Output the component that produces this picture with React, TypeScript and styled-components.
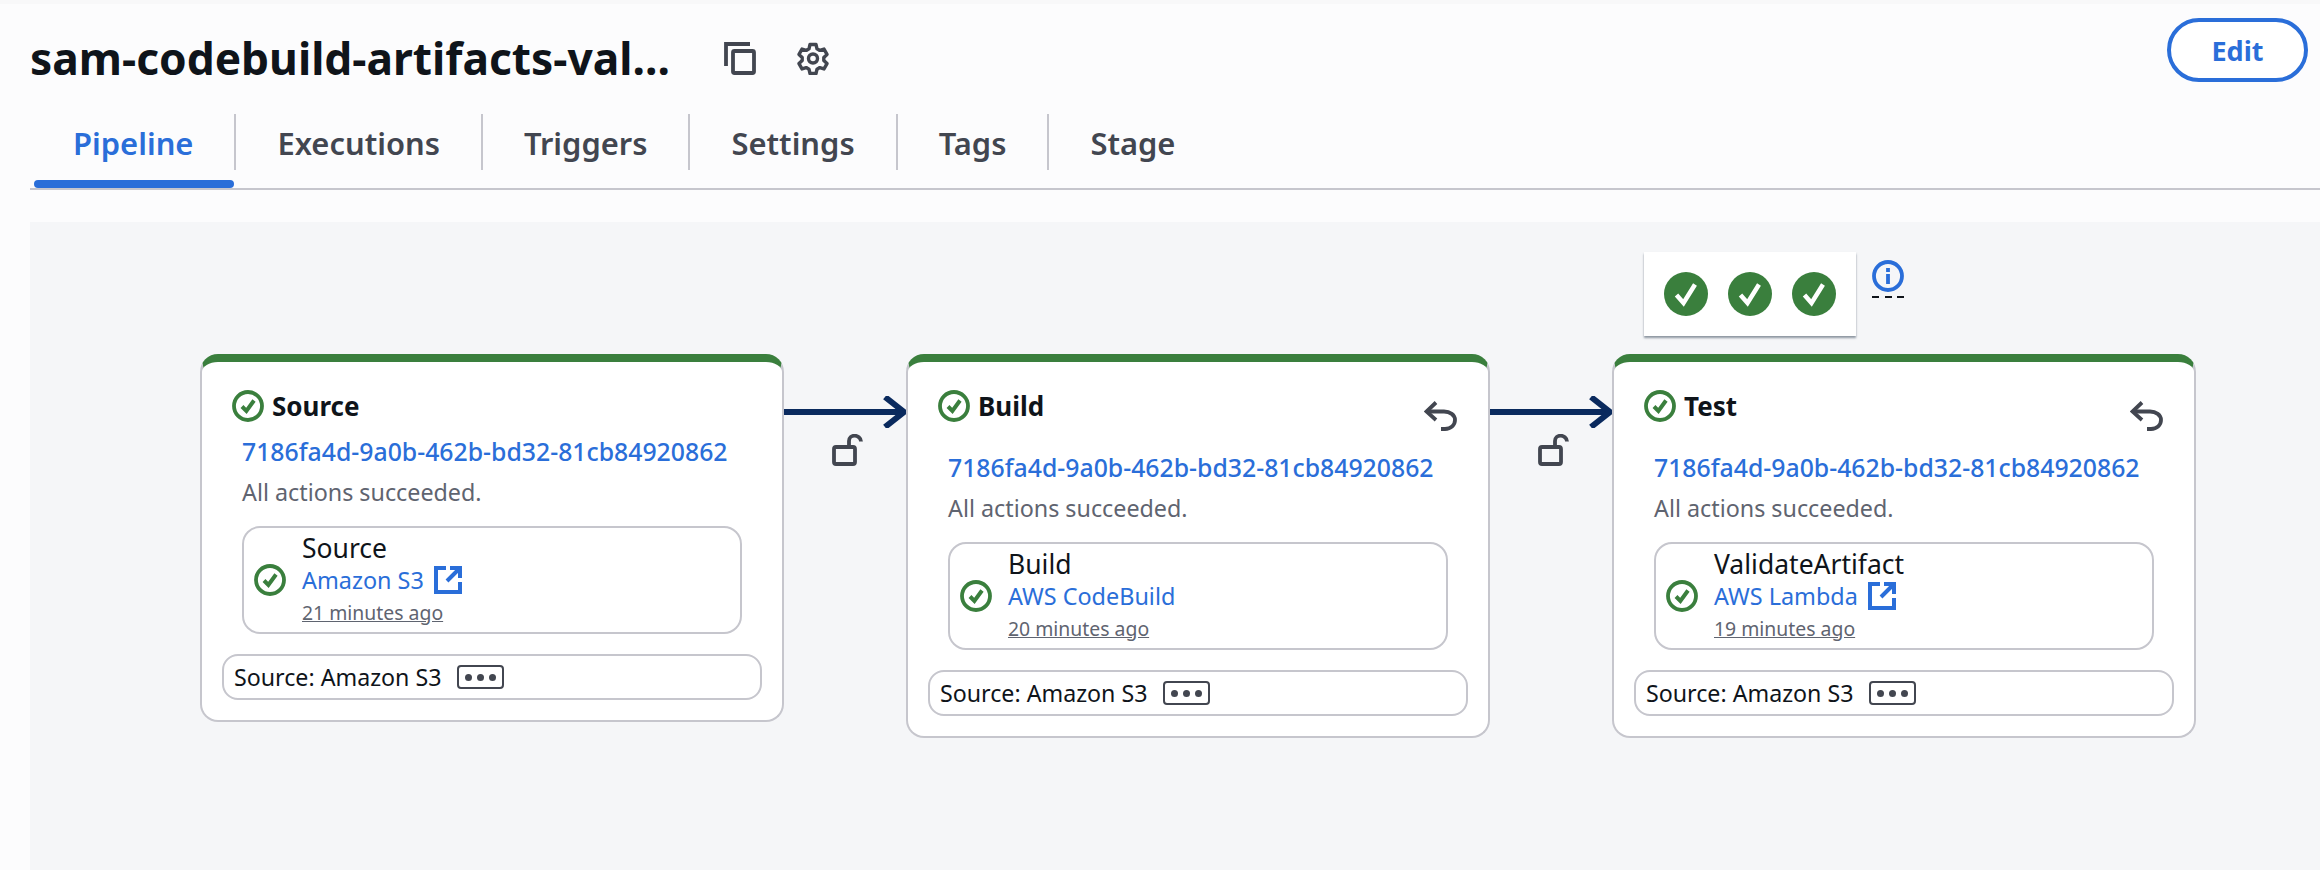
import React from "react";
import styled, { createGlobalStyle } from "styled-components";

const GlobalStyle = createGlobalStyle`
  html, body {
    margin: 0;
    padding: 0;
    background: #fcfcfd;
    font-family: "Noto Sans", "Open Sans", sans-serif;
    color: #0f141a;
  }
  * { box-sizing: border-box; }
`;

const BLUE = "#2a6ed9";
const GREEN = "#3a7f3d";
const GREY = "#424650";

const stages = [
  { name: "Source", action: "Source", provider: "Amazon S3", external: true, time: "21 minutes ago", revert: false },
  { name: "Build", action: "Build", provider: "AWS CodeBuild", external: false, time: "20 minutes ago", revert: true },
  { name: "Test", action: "ValidateArtifact", provider: "AWS Lambda", external: true, time: "19 minutes ago", revert: true },
];

const tabs = ["Pipeline", "Executions", "Triggers", "Settings", "Tags", "Stage"];

const SuccessIcon = () => (
  <svg width="32" height="32" viewBox="0 0 32 32" fill="none" style={{ flexShrink: 0 }}>
    <circle cx="16" cy="16" r="14" stroke={GREEN} strokeWidth="3.8" />
    <path d="M10 16.5l4.4 4.5L22 10.5" stroke={GREEN} strokeWidth="4" />
  </svg>
);

const FilledCheck = () => (
  <svg width="44" height="44" viewBox="0 0 44 44" fill="none">
    <circle cx="22" cy="22" r="22" fill={GREEN} />
    <path d="M12.5 23l7 8L31 12.5" stroke="#fff" strokeWidth="4.5" />
  </svg>
);

const ExternalIcon = () => (
  <svg width="28" height="28" viewBox="0 0 28 28" fill="none" stroke={BLUE} strokeWidth="4">
    <path d="M12 2H2v24h24V16" />
    <path d="M16 2h10v10M25.5 2.5L13 15" />
  </svg>
);

const RevertIcon = () => (
  <svg width="34" height="30" viewBox="0 0 34 30" fill="none" stroke={GREY} strokeWidth="3.8">
    <path d="M12 1.5L2.5 10.5l9.5 8.5" />
    <path d="M3 10.5h17c6 0 11 3.5 11 8.5s-4 9-10 9h-4" />
  </svg>
);

const LockIcon = () => (
  <svg width="32" height="32" viewBox="0 0 32 32" fill="none" stroke={GREY} strokeWidth="3.8">
    <rect x="2" y="13" width="21" height="17" rx="2" />
    <path d="M17 13V7c0-3 2.5-5.3 5.5-5.3S29 4 29 7.5" />
  </svg>
);

const CopyIcon = () => (
  <svg width="32" height="33" viewBox="0 0 32 33" fill="none" stroke={GREY} strokeWidth="3.8">
    <path d="M26 2H2v22" />
    <rect x="9" y="9" width="21" height="22" rx="1.5" />
  </svg>
);

const GearIcon = () => (
  <svg width="32" height="33" viewBox="0 0 32 33" fill="none" stroke={GREY} strokeWidth="3.4" strokeLinejoin="round">
    <circle cx="16" cy="16.5" r="4.5" />
    <path d="M13 2.5h6l1 4.3 2.8 1.6 4.2-1.3 3 5.3-3.2 3v3.2l3.2 3-3 5.3-4.2-1.3-2.8 1.600-1 4.300h-6l-1-4.300-2.800-1.600-4.200 1.300-3-5.300 3.200-3v-3.200l-3.200-3 3-5.300 4.200 1.300L12 6.800z" />
  </svg>
);

const InfoIcon = () => (
  <svg width="32" height="32" viewBox="0 0 32 32" fill="none" stroke={BLUE} strokeWidth="3.8">
    <circle cx="16" cy="16" r="14" />
    <path d="M16 14v10M16 8v4" />
  </svg>
);

const ArrowIcon = () => (
  <svg width="122" height="32" viewBox="0 0 122 32" fill="none" stroke="#0a2a5e" strokeWidth="6">
    <path d="M0 16h118" />
    <path d="M101 1l19 15-19 15" />
  </svg>
);

const Page = styled.div`
  width: 2320px;
  height: 870px;
  overflow: hidden;
  display: flex;
  flex-direction: column;
  border-top: 4px solid #f8f8f9;
`;

const Header = styled.header`
  display: flex;
  justify-content: space-between;
  align-items: flex-start;
  padding: 14px 12px 0 30px;
  height: 110px;
`;

const TitleRow = styled.div`
  display: flex;
  align-items: center;
  height: 80px;
`;

const Title = styled.h1`
  margin: 0 54px 0 0;
  font-size: 44.3px;
  line-height: 80px;
  font-weight: 700;
  color: #0f141a;
`;

const IconButton = styled.span`
  display: flex;
  margin-right: 41px;
`;

const EditButton = styled.button`
  width: 141px;
  height: 64px;
  background: #fff;
  border: 4px solid ${BLUE};
  border-radius: 32px;
  color: ${BLUE};
  font-family: inherit;
  font-size: 27px;
  font-weight: 700;
`;

const TabBar = styled.nav`
  display: flex;
  margin-left: 30px;
  padding: 0 0 18px 2px;
  border-bottom: 2px solid #c6c6cd;
`;

const Tab = styled.div<{ $active?: boolean }>`
  position: relative;
  height: 56px;
  padding: 0 41px;
  border-right: 2px solid #c6c6cd;
  font-size: 30.9px;
  line-height: 58px;
  font-weight: 600;
  color: ${(p) => (p.$active ? BLUE : GREY)};
  &:last-child { border-right: none; }
  ${(p) =>
    p.$active &&
    `&::after {
      content: "";
      position: absolute;
      left: 2px;
      right: 0;
      bottom: -18px;
      height: 8px;
      border-radius: 4px;
      background: ${BLUE};
    }`}
`;

const Canvas = styled.main`
  flex: 1;
  margin: 32px 0 0 30px;
  padding: 132px 0 0 170px;
  background: #f5f6f8;
  display: flex;
  align-items: flex-start;
`;

const Stage = styled.section`
  position: relative;
  width: 584px;
  flex-shrink: 0;
  padding-bottom: 20px;
  background: #fff;
  border: 2px solid #c6c6cd;
  border-top: 8px solid ${GREEN};
  border-radius: 18px;
`;

const StageHeader = styled.div`
  display: flex;
  align-items: flex-start;
  padding: 28px 30px 0 30px;
  margin-bottom: 14px;
`;

const StageName = styled.h2`
  margin: 0 0 0 8px;
  flex: 1;
  font-size: 26px;
  line-height: 32px;
  font-weight: 700;
  color: #0f141a;
`;

const RevertSlot = styled.span`
  display: flex;
  height: 48px;
  padding-top: 11px;
`;

const ExecutionId = styled.a`
  display: block;
  margin-left: 40px;
  font-size: 24.8px;
  line-height: 30px;
  font-weight: 500;
  color: ${BLUE};
`;

const Summary = styled.p`
  margin: 10px 0 18px 40px;
  font-size: 23.3px;
  line-height: 32px;
  color: #5f6470;
`;

const ActionCard = styled.div`
  display: flex;
  align-items: center;
  gap: 16px;
  width: 500px;
  height: 108px;
  margin-left: 40px;
  padding-left: 10px;
  border: 2px solid #c6c6cd;
  border-radius: 18px;
`;

const ActionText = styled.div`
  display: flex;
  flex-direction: column;
`;

const ActionName = styled.div`
  font-size: 26.5px;
  line-height: 33px;
  color: #0f141a;
`;

const ProviderRow = styled.div`
  display: flex;
  align-items: center;
  gap: 10px;
  height: 30px;
`;

const Provider = styled.a`
  font-size: 23.4px;
  line-height: 30px;
  color: ${BLUE};
`;

const TimeAgo = styled.span`
  margin-top: 2px;
  font-size: 19.4px;
  line-height: 32px;
  color: #5f6470;
  text-decoration: underline;
`;

const Artifact = styled.div`
  display: flex;
  align-items: center;
  gap: 16px;
  width: 540px;
  height: 46px;
  margin: 20px 0 0 20px;
  padding-left: 10px;
  border: 2px solid #c6c6cd;
  border-radius: 16px;
  font-size: 23.2px;
  color: #0f141a;
`;

const DotsButton = styled.span`
  display: flex;
  align-items: center;
  justify-content: center;
  gap: 5px;
  width: 47px;
  height: 24px;
  border: 2px solid ${GREY};
  border-radius: 4px;
`;

const Dot = styled.i`
  width: 7px;
  height: 7px;
  border-radius: 50%;
  background: ${GREY};
`;

const Transition = styled.div`
  width: 122px;
  flex-shrink: 0;
  padding-top: 42px;
  display: flex;
  flex-direction: column;
`;

const LockSlot = styled.span`
  display: flex;
  margin: 6px 0 0 48px;
`;

const RuleBadge = styled.div`
  position: absolute;
  top: -110px;
  left: 30px;
  display: flex;
  gap: 20px;
  padding: 20px;
  height: 84px;
  background: #fff;
  box-shadow: 0 2px 2px rgba(70, 85, 100, 0.6);
`;

const InfoLink = styled.span`
  position: absolute;
  top: -102px;
  left: 258px;
  display: flex;
  padding-bottom: 6px;
  background: repeating-linear-gradient(90deg, #0f141a 0 7px, transparent 7px 12.5px) bottom / 100% 2px no-repeat;
`;

export default function App() {
  return (
    <Page>
      <GlobalStyle />
      <Header>
        <TitleRow>
          <Title>sam-codebuild-artifacts-val...</Title>
          <IconButton>
            <CopyIcon />
          </IconButton>
          <IconButton>
            <GearIcon />
          </IconButton>
        </TitleRow>
        <EditButton>Edit</EditButton>
      </Header>
      <TabBar>
        {tabs.map((t, i) => (
          <Tab key={t} $active={i === 0}>
            {t}
          </Tab>
        ))}
      </TabBar>
      <Canvas>
        {stages.map((s, i) => (
          <React.Fragment key={s.name}>
            {i > 0 && (
              <Transition>
                <ArrowIcon />
                <LockSlot>
                  <LockIcon />
                </LockSlot>
              </Transition>
            )}
            <Stage>
              {s.name === "Test" && (
                <>
                  <RuleBadge>
                    <FilledCheck />
                    <FilledCheck />
                    <FilledCheck />
                  </RuleBadge>
                  <InfoLink>
                    <InfoIcon />
                  </InfoLink>
                </>
              )}
              <StageHeader>
                <SuccessIcon />
                <StageName>{s.name}</StageName>
                {s.revert && (
                  <RevertSlot>
                    <RevertIcon />
                  </RevertSlot>
                )}
              </StageHeader>
              <ExecutionId>7186fa4d-9a0b-462b-bd32-81cb84920862</ExecutionId>
              <Summary>All actions succeeded.</Summary>
              <ActionCard>
                <SuccessIcon />
                <ActionText>
                  <ActionName>{s.action}</ActionName>
                  <ProviderRow>
                    <Provider>{s.provider}</Provider>
                    {s.external && <ExternalIcon />}
                  </ProviderRow>
                  <TimeAgo>{s.time}</TimeAgo>
                </ActionText>
              </ActionCard>
              <Artifact>
                Source: Amazon S3
                <DotsButton>
                  <Dot />
                  <Dot />
                  <Dot />
                </DotsButton>
              </Artifact>
            </Stage>
          </React.Fragment>
        ))}
      </Canvas>
    </Page>
  );
}
